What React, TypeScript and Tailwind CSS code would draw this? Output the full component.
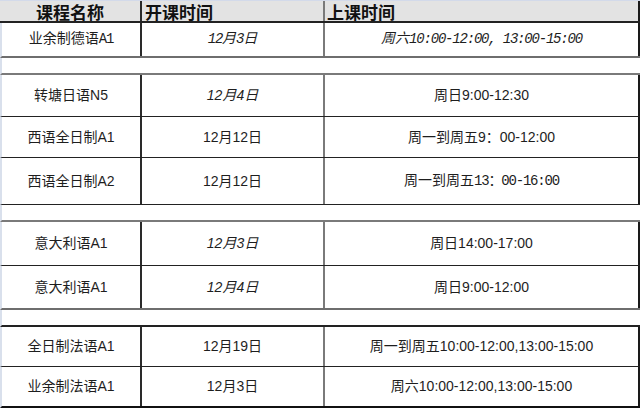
import React from "react";

const SANS = { fontFamily: '"Liberation Sans", "Noto Sans CJK SC", sans-serif' };
const SONG = { fontFamily: '"Liberation Mono", "Noto Sans CJK SC", monospace' };

type Cell = { text: React.ReactNode; italic?: boolean; song?: boolean };
type Row = { h: string; border: string; cells: [Cell, Cell, Cell] };

function Mono({ children }: { children: React.ReactNode }) {
  return <span className="tracking-[-1.2px]">{children}</span>;
}

function DataRow({ row }: { row: Row }) {
  return (
    <div className={`flex ${row.h} ${row.border} border-l-2 border-l-[#d9e0ec] text-[14px] text-[#1e1e1e]`}>
      {row.cells.map((c, i) => (
        <div
          key={i}
          className={`flex items-center justify-center ${
            i === 0
              ? "w-[140px] border-r-2 border-r-[#2a2a2a]"
              : i === 1
              ? "w-[183px] border-r-2 border-r-[#7a7a7a]"
              : "flex-1 border-r-2 border-r-[#1a1a1a]"
          } ${c.italic ? "italic" : ""}`}
          style={c.song ? SONG : SANS}
        >
          {c.text}
        </div>
      ))}
    </div>
  );
}

function Gap({ border }: { border: string }) {
  return <div className={`h-[17px] ${border} border-l-2 border-l-[#d9e0ec] bg-white`} />;
}

export default function App() {
  const rows1: Row[] = [
    {
      h: "h-[35px]",
      border: "border-b-2 border-b-[#6e6e6e]",
      cells: [
        { text: <span>业余制德语<Mono>A1</Mono></span>, song: true },
        { text: <span><Mono>12</Mono>月<Mono>3</Mono>日</span>, italic: true, song: true },
        { text: <span>周六<Mono>10:00-12:00, 13:00-15:00</Mono></span>, italic: true, song: true },
      ],
    },
  ];
  const rows2: Row[] = [
    {
      h: "h-[42px]",
      border: "border-b border-b-[#222]",
      cells: [{ text: "转塘日语N5" }, { text: "12月4日", italic: true }, { text: "周日9:00-12:30" }],
    },
    {
      h: "h-[41px]",
      border: "border-b border-b-[#222]",
      cells: [{ text: "西语全日制A1" }, { text: "12月12日" }, { text: "周一到周五9：00-12:00" }],
    },
    {
      h: "h-[47px]",
      border: "border-b border-b-[#222]",
      cells: [
        { text: "西语全日制A2" },
        { text: "12月12日" },
        { text: <span>周一到周五<Mono>13：00-16:00</Mono></span>, song: true },
      ],
    },
  ];
  const rows3: Row[] = [
    {
      h: "h-[44px]",
      border: "border-b border-b-[#222]",
      cells: [{ text: "意大利语A1" }, { text: "12月3日", italic: true }, { text: "周日14:00-17:00" }],
    },
    {
      h: "h-[44px]",
      border: "border-b-2 border-b-[#6e6e6e]",
      cells: [{ text: "意大利语A1" }, { text: "12月4日", italic: true }, { text: "周日9:00-12:00" }],
    },
  ];
  const rows4: Row[] = [
    {
      h: "h-[40px]",
      border: "border-b border-b-[#222]",
      cells: [{ text: "全日制法语A1" }, { text: "12月19日" }, { text: "周一到周五10:00-12:00,13:00-15:00" }],
    },
    {
      h: "h-[41px]",
      border: "border-b-2 border-b-[#111]",
      cells: [{ text: "业余制法语A1" }, { text: "12月3日" }, { text: "周六10:00-12:00,13:00-15:00" }],
    },
  ];

  return (
    <div className="w-[640px] h-[408px] bg-white overflow-hidden flex flex-col">
      <div
        className="flex h-[23px] bg-[#e3e3e3] border-t border-t-[#d3daea] border-b-2 border-b-[#222] text-[17px] font-bold text-[#111] leading-none"
        style={{ fontFamily: '"Noto Sans CJK SC", sans-serif' }}
      >
        <div className="w-[142px] flex items-center justify-center border-r-2 border-r-[#2a2a2a]">课程名称</div>
        <div className="w-[183px] flex items-center pl-[3px] border-r-2 border-r-[#7a7a7a]">开课时间</div>
        <div className="flex-1 flex items-center pl-[2px] border-r-2 border-r-[#1a1a1a]">上课时间</div>
      </div>
      {rows1.map((r, i) => (
        <DataRow key={"a" + i} row={r} />
      ))}
      <Gap border="border-b-2 border-b-[#7a7a7a]" />
      {rows2.map((r, i) => (
        <DataRow key={"b" + i} row={r} />
      ))}
      <Gap border="border-b-2 border-b-[#7a7a7a]" />
      {rows3.map((r, i) => (
        <DataRow key={"c" + i} row={r} />
      ))}
      <Gap border="border-b-2 border-b-[#222]" />
      {rows4.map((r, i) => (
        <DataRow key={"d" + i} row={r} />
      ))}
    </div>
  );
}
